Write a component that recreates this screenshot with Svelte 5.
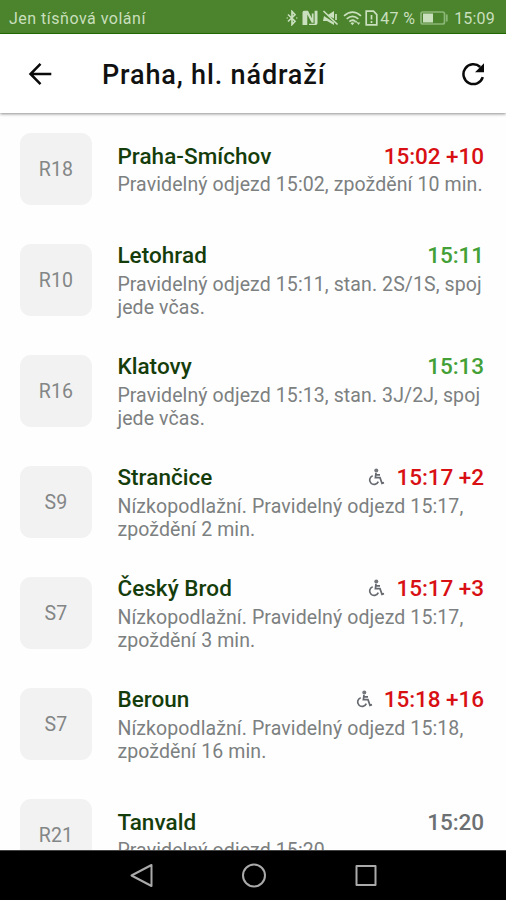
<script lang="ts">
  type Departure = {
    line: string;
    destination: string;
    time: string;
    status: 'late' | 'ontime' | 'unknown';
    accessible?: boolean;
    info: string;
  };

  const departures: Departure[] = [
    {
      line: 'R18',
      destination: 'Praha-Smíchov',
      time: '15:02 +10',
      status: 'late',
      info: 'Pravidelný odjezd 15:02, zpoždění 10 min.'
    },
    {
      line: 'R10',
      destination: 'Letohrad',
      time: '15:11',
      status: 'ontime',
      info: 'Pravidelný odjezd 15:11, stan. 2S/1S, spoj jede včas.'
    },
    {
      line: 'R16',
      destination: 'Klatovy',
      time: '15:13',
      status: 'ontime',
      info: 'Pravidelný odjezd 15:13, stan. 3J/2J, spoj jede včas.'
    },
    {
      line: 'S9',
      destination: 'Strančice',
      time: '15:17 +2',
      status: 'late',
      accessible: true,
      info: 'Nízkopodlažní. Pravidelný odjezd 15:17, zpoždění 2 min.'
    },
    {
      line: 'S7',
      destination: 'Český Brod',
      time: '15:17 +3',
      status: 'late',
      accessible: true,
      info: 'Nízkopodlažní. Pravidelný odjezd 15:17, zpoždění 3 min.'
    },
    {
      line: 'S7',
      destination: 'Beroun',
      time: '15:18 +16',
      status: 'late',
      accessible: true,
      info: 'Nízkopodlažní. Pravidelný odjezd 15:18, zpoždění 16 min.'
    },
    {
      line: 'R21',
      destination: 'Tanvald',
      time: '15:20',
      status: 'unknown',
      info: 'Pravidelný odjezd 15:20'
    }
  ];
</script>

<div class="screen">
  <div class="status-bar">
    <span class="carrier">Jen tísňová volání</span>
    <div class="status-icons">
      <svg class="bluetooth" width="12" height="16" viewBox="0 0 12 16">
        <path d="M2 4.5 9 11.2 6 14.5V1.5l3 3.3L2 11.5M.7 8h1M10.3 8h1" />
      </svg>
      <svg class="nfc" width="16" height="16" viewBox="0 0 16 16">
        <path class="solid" d="M.5 15V2.5Q.5.8 2.2.8H6l3.8 7.4V3.5h1.8v9.3H9.7L5.3 4.6V15z" />
        <path class="solid" d="M12.6.8h2.9v12.5q0 1.7-1.7 1.7H7V13.8h5.6z" />
      </svg>
      <svg class="mute" width="17" height="16" viewBox="0 0 17 16">
        <path class="solid" d="M1 5.5h4L12 1v7.5L5.5 5.2M2 6l10 6.5V15L5 11H1z" />
        <path d="M1.5 1 15.5 14.5M14 4v6" />
      </svg>
      <svg class="wifi" width="19" height="16" viewBox="0 0 19 16">
        <path d="M1 5.8Q9.5-1.5 18 5.8M3.7 8.8Q9.5 3.8 15.3 8.8M6.3 11.6Q9.5 9 12.2 11.4" />
        <path class="solid" d="M7.5 13.2Q9.5 11.4 11.2 13.2L9.4 15.2zM13 10.5l1.8 2h-3.6zM15.5 15l1.8-2.4h-3.6z" />
      </svg>
      <svg class="sim" width="13" height="16" viewBox="0 0 13 16">
        <path d="M1.2 1.2h7.3l3.3 3.4v10.2H1.2zM6.5 5v4.5M6.5 11v2" />
      </svg>
      <span class="percent">47 %</span>
      <svg class="battery" width="28" height="14" viewBox="0 0 28 14">
        <rect x="1" y="1" width="23.5" height="12" rx="2" />
        <path class="solid" d="M3 2.5h10v9H3z" />
        <path class="tip" d="M26.8 3.5v7" />
      </svg>
      <span class="clock">15:09</span>
    </div>
  </div>

  <header>
    <button class="back" aria-label="Zpět">
      <svg width="24" height="24" viewBox="0 0 24 24">
        <path d="M23.3 12H3M12.5 1.8 2.5 12l10 10.2" />
      </svg>
    </button>
    <h1>Praha, hl. nádraží</h1>
    <button class="refresh" aria-label="Obnovit">
      <svg width="24" height="24" viewBox="0 0 24 24">
        <path d="M21.8 15.2A9.9 9.9 0 1 1 19.2 5" />
        <path class="head" d="M23 1.2V10.2H14z" />
      </svg>
    </button>
  </header>

  <main>
    {#each departures as departure}
      <div class="row">
        <div class="line">{departure.line}</div>
        <div class="detail">
          <div class="top">
            <h2>{departure.destination}</h2>
            {#if departure.accessible}
              <svg class="wheelchair" width="17" height="18" viewBox="0 0 17 18">
                <circle class="solid" cx="8.3" cy="2.5" r="2" />
                <path d="M8 4.8 7.4 9.6H12L14 15.3 16 14.6M8.2 6.8H12M4.7 7.7A4.5 4.5 0 1 0 10.3 13.7" />
              </svg>
            {/if}
            <span class="time {departure.status}">{departure.time}</span>
          </div>
          <p>{departure.info}</p>
        </div>
      </div>
    {/each}
  </main>

  <nav>
    <svg width="24" height="26" viewBox="0 0 24 26">
      <path d="M21.5 2v21L1.5 12.5z" />
    </svg>
    <svg width="26" height="26" viewBox="0 0 26 26">
      <circle cx="13" cy="12.5" r="11" />
    </svg>
    <svg width="24" height="26" viewBox="0 0 24 26">
      <rect x="2.5" y="3" width="19" height="19" />
    </svg>
  </nav>
</div>

<style>
  :global(body) {
    background: #fff;
  }

  .screen {
    display: flex;
    flex-direction: column;
    width: 506px;
    height: 900px;
    overflow: hidden;
    background: #fefefe;
    font-family: Roboto, sans-serif;
  }

  .status-bar {
    display: flex;
    flex: none;
    justify-content: space-between;
    align-items: center;
    box-sizing: border-box;
    height: 34px;
    padding: 3px 11px 0 9px;
    border-bottom: 1px solid #247000;
    background: #4b842d;
    color: #c9dfbd;
    font-size: 16px;
  }

  .carrier {
    letter-spacing: 0.5px;
  }

  .status-icons {
    display: flex;
    align-items: center;
  }

  .status-icons svg {
    fill: none;
    stroke: #c9dfbd;
    stroke-width: 1.7;
  }

  .status-icons .solid {
    fill: #c9dfbd;
    stroke: none;
  }

  .nfc,
  .mute,
  .wifi {
    margin-left: 4px;
  }

  .sim {
    margin-left: 3px;
  }

  .percent {
    margin-left: 2px;
    letter-spacing: 0.3px;
  }

  .battery {
    margin: 0 6px 0 5px;
  }

  .clock {
    letter-spacing: 0.2px;
  }

  .battery rect,
  .battery .tip {
    stroke: #8db778;
  }

  header {
    display: flex;
    flex: none;
    align-items: center;
    position: relative;
    box-sizing: border-box;
    height: 79px;
    padding: 0 21px 0 28px;
    background: #fff;
    box-shadow: 0 1px 3px rgba(0, 0, 0, 0.45);
  }

  button {
    display: flex;
    padding: 0;
    border: 0;
    background: none;
  }

  header svg {
    fill: none;
    stroke: #0a0a0a;
    stroke-width: 2.5;
  }

  header .head {
    fill: #0a0a0a;
    stroke: none;
  }

  h1 {
    flex: 1;
    margin: 2px 0 0 50px;
    color: #111;
    font-size: 27px;
    font-weight: 500;
    letter-spacing: 0.85px;
  }

  main {
    flex: 1;
    min-height: 0;
    overflow: hidden;
  }

  .row {
    display: flex;
    align-items: center;
    height: 111px;
    padding: 0 22px 0 20px;
  }

  .line {
    display: flex;
    flex: none;
    justify-content: center;
    align-items: center;
    box-sizing: border-box;
    width: 72px;
    height: 72px;
    padding-top: 1px;
    border-radius: 11px;
    background: #f2f2f2;
    color: #838686;
    font-size: 19.5px;
    letter-spacing: 0.2px;
  }

  .detail {
    flex: 1;
    margin-left: 25.4px;
  }

  .top {
    display: flex;
    align-items: center;
    height: 29px;
  }

  h2 {
    flex: 1;
    margin: 0;
    color: #153d0c;
    font-size: 22.5px;
    font-weight: 500;
    letter-spacing: 0.05px;
  }

  .wheelchair {
    margin-right: 11px;
    fill: none;
    stroke: #666a70;
    stroke-width: 1.7;
  }

  .wheelchair .solid {
    fill: #74777c;
    stroke: none;
  }

  .time {
    font-size: 22.5px;
    font-weight: 500;
    letter-spacing: -0.05px;
  }

  .late {
    color: #d80f13;
  }

  .ontime {
    color: #43a036;
  }

  .unknown {
    color: #6c7073;
  }

  p {
    margin: 3px 0 0;
    color: #7c8080;
    font-size: 19.5px;
    line-height: 23px;
    letter-spacing: 0.1px;
  }

  nav {
    display: flex;
    flex: none;
    justify-content: center;
    align-items: center;
    gap: 87px;
    box-sizing: border-box;
    height: 50px;
    padding-left: 2px;
    border-top: 1px solid #444;
    background: #000;
  }

  nav svg {
    fill: none;
    stroke: #aaa;
    stroke-width: 2;
    stroke-linejoin: round;
  }
</style>
